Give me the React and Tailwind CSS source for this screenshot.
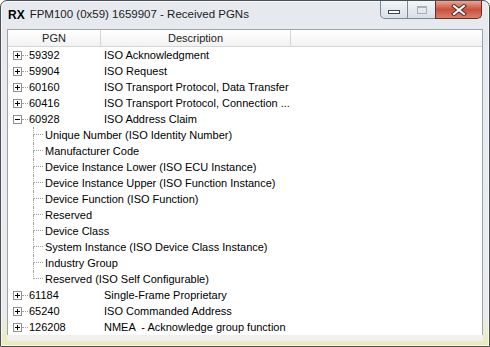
import React from "react";

const topRows = [
  { pgn: "59392", desc: "ISO Acknowledgment" },
  { pgn: "59904", desc: "ISO Request" },
  { pgn: "60160", desc: "ISO Transport Protocol, Data Transfer" },
  { pgn: "60416", desc: "ISO Transport Protocol, Connection ..." },
];

const children = [
  "Unique Number (ISO Identity Number)",
  "Manufacturer Code",
  "Device Instance Lower (ISO ECU Instance)",
  "Device Instance Upper (ISO Function Instance)",
  "Device Function (ISO Function)",
  "Reserved",
  "Device Class",
  "System Instance (ISO Device Class Instance)",
  "Industry Group",
  "Reserved (ISO Self Configurable)",
];

const bottomRows = [
  { pgn: "61184", desc: "Single-Frame Proprietary" },
  { pgn: "65240", desc: "ISO Commanded Address" },
  { pgn: "126208", desc: "NMEA  - Acknowledge group function" },
];

// little +/- box of the tree
function Expander({ open }) {
  return (
    <svg width="9" height="9" viewBox="0 0 9 9" className="shrink-0">
      <rect x="0.5" y="0.5" width="8" height="8" fill="#fff" stroke="#919191" />
      <path d="M2 4.5h5" stroke="#000" />
      {!open && <path d="M4.5 2v5" stroke="#000" />}
    </svg>
  );
}

function TopRow({ pgn, desc, open }) {
  return (
    <div className="flex h-4 items-center">
      <div className="flex w-[93px] shrink-0 items-center pl-[5px]">
        <Expander open={open} />
        <div className="w-[6px] border-t border-dotted border-[#a0a0a0]"></div>
        <span className="ml-[1px]">{pgn}</span>
      </div>
      <span className="whitespace-pre pl-[3px]">{desc}</span>
    </div>
  );
}

function ChildRow({ label, last }) {
  return (
    <div className="flex h-4 items-stretch">
      <div className="ml-[25px] flex w-[10px] shrink-0 flex-col">
        <div className="h-[8px] border-b border-l border-dotted border-[#a0a0a0]"></div>
        {!last && <div className="flex-1 border-l border-dotted border-[#a0a0a0]"></div>}
      </div>
      <span className="ml-[2px] self-center whitespace-nowrap">{label}</span>
    </div>
  );
}

export default function App() {
  return (
    <div className="h-[347px] w-[490px] bg-white">
      <div
        className="flex h-full w-full flex-col rounded-t-[7px] border border-[#4b4f55] bg-linear-to-b from-[#e6eaef] via-[#e9ecef] via-90% to-[#eeeab8] shadow-[inset_0_0_0_1px_rgba(255,255,255,0.7)]"
        style={{ fontFamily: '"Liberation Sans", Arial, sans-serif' }}
      >
        {/* title bar */}
        <div className="flex h-[28px] shrink-0 items-center">
          <span className="pl-[7px] text-[12px] font-bold text-black">RX</span>
          <span className="ml-[5px] text-[11.5px] text-[#1c1c1c]">
            FPM100 (0x59) 1659907 - Received PGNs
          </span>
          <div className="mr-[7px] ml-auto flex h-[18px] self-start">
            <div className="flex w-[28px] items-center justify-center rounded-bl-[5px] border border-t-0 border-[#7d8896] bg-linear-to-b from-[#f3f5f8] to-[#d9dfe7]">
              <div className="mt-[4px] h-[4px] w-[12px] border border-[#3c4450] bg-white"></div>
            </div>
            <div className="flex w-[27px] items-center justify-center border-b border-[#7d8896] bg-linear-to-b from-[#f3f5f8] to-[#d9dfe7]">
              <div className="h-[8px] w-[10px] border border-[#a8b0bb] border-t-2"></div>
            </div>
            <div className="flex w-[47px] items-center justify-center rounded-br-[5px] border border-t-0 border-[#6b2a22] bg-linear-to-b from-[#e7a595] via-[#c8503f] to-[#d6806a]">
              <svg width="16" height="12" viewBox="0 0 16 12">
                <path d="M3 2l10 8M13 2L3 10" stroke="#4a2a26" strokeWidth="4" strokeLinecap="square" />
                <path d="M3 2l10 8M13 2L3 10" stroke="#fff" strokeWidth="2" strokeLinecap="square" />
              </svg>
            </div>
          </div>
        </div>

        {/* client area */}
        <div className="mx-[6px] mb-[7px] flex flex-1 flex-col bg-[#f0f0f0] pb-[6px]">
          <div className="flex-1 overflow-hidden border border-b-0 border-[#9ea3a9] bg-white text-[11px] text-black">
            <div className="flex h-[17px] border-b border-[#d5d5d5] bg-linear-to-b from-white to-[#f2f2f2] text-[#222]">
              <div className="flex w-[93px] items-center justify-center border-r border-[#d5d5d5]">PGN</div>
              <div className="flex w-[190px] items-center justify-center border-r border-[#d5d5d5]">Description</div>
              <div className="flex-1"></div>
            </div>
            {topRows.map((r) => (
              <TopRow key={r.pgn} {...r} />
            ))}
            <TopRow pgn="60928" desc="ISO Address Claim" open />
            {children.map((c, i) => (
              <ChildRow key={i} label={c} last={i === children.length - 1} />
            ))}
            {bottomRows.map((r) => (
              <TopRow key={r.pgn} {...r} />
            ))}
          </div>
        </div>
      </div>
    </div>
  );
}
